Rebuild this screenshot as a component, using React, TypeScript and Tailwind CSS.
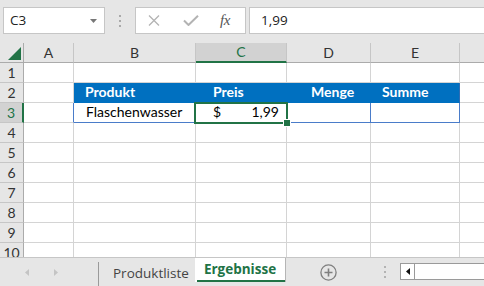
import React from 'react'

const COLS = [
  { key: 'A', w: 'w-[50px]' },
  { key: 'B', w: 'w-[122px]' },
  { key: 'C', w: 'w-[91px]' },
  { key: 'D', w: 'w-[84px]' },
  { key: 'E', w: 'w-[89px]' },
  { key: 'F', w: 'w-[40px]' },
]

const BLUE = 'bg-[#0070c0]'

function Toolbar() {
  return (
    <div className="h-[43px] shrink-0 bg-[#e6e6e6] flex items-start pt-[7px] pl-[3px] font-['Open_Sans',sans-serif]">
      {/* name box */}
      <div className="w-[102px] shrink-0 h-[27px] bg-white border border-[#c6c6c6] flex items-center justify-between pl-[6px] pr-[7px]">
        <span className="text-[13.5px] text-[#222] leading-none">C3</span>
        <svg width="7" height="4" viewBox="0 0 7 4">
          <polygon points="0,0 7,0 3.5,4" fill="#777" />
        </svg>
      </div>
      {/* grip dots */}
      <div className="w-[30px] shrink-0 h-[27px] flex flex-col items-center justify-center gap-[3px]">
        <span className="w-[2px] h-[2px] bg-[#a9a9a9]" />
        <span className="w-[2px] h-[2px] bg-[#a9a9a9]" />
        <span className="w-[2px] h-[2px] bg-[#a9a9a9]" />
      </div>
      {/* cancel / enter / fx */}
      <div className="w-[111px] shrink-0 h-[27px] bg-white border border-[#c6c6c6] flex items-center">
        <svg className="ml-[12px]" width="12" height="11" viewBox="0 0 12 11">
          <path d="M1 0.5 L11 10.5 M11 0.5 L1 10.5" stroke="#b3b3b3" strokeWidth="1.3" fill="none" />
        </svg>
        <svg className="ml-[23px]" width="16" height="11" viewBox="0 0 16 11">
          <path d="M1 5.5 L5.5 10 L15 0.8" stroke="#b3b3b3" strokeWidth="2" fill="none" />
        </svg>
        <span className="ml-[21px] font-['Liberation_Serif',serif] italic text-[15px] text-[#555] leading-none tracking-[-0.5px]">
          fx
        </span>
      </div>
      {/* formula input */}
      <div className="ml-[3px] w-[240px] shrink-0 h-[27px] bg-white border border-[#c6c6c6] flex items-center pl-[11px]">
        <span className="text-[13.5px] text-[#222] leading-none">1,99</span>
      </div>
    </div>
  )
}

function ColumnHeader() {
  return (
    <div className="flex h-[20px] shrink-0 bg-[#e6e6e6]">
      <div className="w-[24px] shrink-0 border-r border-b border-[#ababab] relative">
        <svg className="absolute left-[8px] top-[4px]" width="13" height="13" viewBox="0 0 13 13">
          <polygon points="0,13 13,0 13,13" fill="#217346" />
        </svg>
      </div>
      {COLS.map((c) => {
        const active = c.key === 'C'
        return (
          <div
            key={c.key}
            className={`${c.w} shrink-0 flex items-center justify-center text-[14px] leading-none border-r border-r-[#c6c6c6] ${
              active
                ? 'bg-[#d2d2d2] text-[#217346] border-b-2 border-b-[#217346]'
                : 'text-[#333] border-b border-b-[#ababab]'
            }`}
          >
            {c.key === 'F' ? '' : c.key}
          </div>
        )
      })}
    </div>
  )
}

function RowHeader({ n }: { n: number }) {
  const active = n === 3
  return (
    <div
      className={`w-[24px] h-[20px] shrink-0 flex items-center justify-center text-[14px] leading-none border-b border-b-[#c6c6c6] ${
        active
          ? 'bg-[#d2d2d2] text-[#217346] border-r-2 border-r-[#217346]'
          : 'bg-[#e6e6e6] text-[#333] border-r border-r-[#ababab]'
      }`}
    >
      {n}
    </div>
  )
}

function GridRow({ n }: { n: number }) {
  const base = 'shrink-0 h-[20px] border-r border-b border-[#d4d4d4]'
  const head = `shrink-0 h-[20px] ${BLUE} border-b border-b-[#0070c0] leading-[17px] font-bold text-white`
  const body = 'shrink-0 h-[20px] border-b border-b-[#4a7cc9] leading-[17px] text-black'
  if (n === 2) {
    return (
      <div className="flex h-[20px]">
        <RowHeader n={n} />
        <div className={`${base} w-[50px]`} />
        <div className={`${head} w-[122px] pl-[11px]`}>Produkt</div>
        <div className={`${head} w-[91px] pl-[17px]`}>Preis</div>
        <div className={`${head} w-[84px] pl-[24px]`}>Menge</div>
        <div className={`${head} w-[89px] pl-[11px] border-r border-r-[#2e6db4]`}>Summe</div>
        <div className={`${base} w-[40px]`} />
      </div>
    )
  }
  if (n === 3) {
    return (
      <div className="flex h-[20px]">
        <RowHeader n={n} />
        <div className="shrink-0 h-[20px] w-[50px] border-b border-b-[#d4d4d4] border-r border-r-[#4a7cc9]" />
        <div className={`${body} w-[122px] border-r border-r-[#d4d4d4] pl-[12px]`}>Flaschenwasser</div>
        <div className={`${body} w-[91px] border-r border-r-[#d4d4d4] relative flex justify-between pl-[17px] pr-[7px]`}>
          <span>$</span>
          <span>1,99</span>
          <div className="absolute -left-[2px] -top-[1px] w-[94px] h-[22px] border-2 border-[#217346]" />
          <div className="absolute -right-[4px] -bottom-[4px] w-[6px] h-[6px] bg-[#217346] outline outline-1 outline-white" />
        </div>
        <div className={`${body} w-[84px] border-r border-r-[#4a7cc9]`} />
        <div className={`${body} w-[89px] border-r border-r-[#4a7cc9]`} />
        <div className={`${base} w-[40px]`} />
      </div>
    )
  }
  return (
    <div className="flex h-[20px]">
      <RowHeader n={n} />
      {COLS.map((c) => (
        <div key={c.key} className={`${base} ${c.w}`} />
      ))}
    </div>
  )
}

function SheetTabs() {
  return (
    <div className="h-[29px] shrink-0 bg-[#e6e6e6] border-t border-[#c6c6c6] flex items-start font-['Open_Sans',sans-serif]">
      <div className="w-[98px] shrink-0 h-[28px] flex items-center">
        <svg className="ml-[25px]" width="4" height="7" viewBox="0 0 4 7">
          <polygon points="4,0 4,7 0,3.5" fill="#c4c4c4" />
        </svg>
        <svg className="ml-[25px]" width="4" height="7" viewBox="0 0 4 7">
          <polygon points="0,0 0,7 4,3.5" fill="#c4c4c4" />
        </svg>
      </div>
      <div className="w-[97px] shrink-0 h-[24px] mt-[4px] border-l border-[#9a9a9a] pl-[14px] flex items-center text-[13.5px] leading-none text-[#444] whitespace-nowrap">
        Produktliste
      </div>
      <div className="w-[91px] shrink-0 h-[24px] bg-white border-r border-[#b5b5b5] flex flex-col">
        <div className="flex-1 flex items-center justify-center text-[13.5px] leading-none font-bold text-[#217346] pt-[2px] whitespace-nowrap">
          Ergebnisse
        </div>
        <div className="h-[2px] ml-[2px] bg-[#217346]" />
      </div>
      <div className="w-[84px] shrink-0 h-[28px] flex items-center justify-center">
        <svg width="17" height="17" viewBox="0 0 17 17">
          <circle cx="8.5" cy="8.5" r="7.6" stroke="#7f7f7f" strokeWidth="1.3" fill="none" />
          <path d="M8.5 4.5 V12.5 M4.5 8.5 H12.5" stroke="#7f7f7f" strokeWidth="1.6" />
        </svg>
      </div>
      <div className="w-[30px] shrink-0 h-[28px] flex flex-col items-center justify-center gap-[3px]">
        <span className="w-[2px] h-[2px] bg-[#b3b3b3]" />
        <span className="w-[2px] h-[2px] bg-[#b3b3b3]" />
        <span className="w-[2px] h-[2px] bg-[#b3b3b3]" />
      </div>
      <div className="mt-[5px] flex h-[17px] shrink-0">
        <div className="w-[15px] h-[17px] bg-white border border-[#9a9a9a] flex items-center justify-center">
          <svg width="4" height="7" viewBox="0 0 4 7">
            <polygon points="4,0 4,7 0,3.5" fill="#111" />
          </svg>
        </div>
        <div className="w-[80px] h-[17px] bg-white border-y border-[#9a9a9a]" />
      </div>
    </div>
  )
}

export default function App() {
  return (
    <div className="w-[484px] h-[286px] overflow-hidden bg-white flex flex-col font-['Lato',sans-serif] text-[14px]">
      <Toolbar />
      <ColumnHeader />
      <div className="flex-1 overflow-hidden">
        {Array.from({ length: 10 }, (_, i) => (
          <GridRow key={i} n={i + 1} />
        ))}
      </div>
      <SheetTabs />
    </div>
  )
}
